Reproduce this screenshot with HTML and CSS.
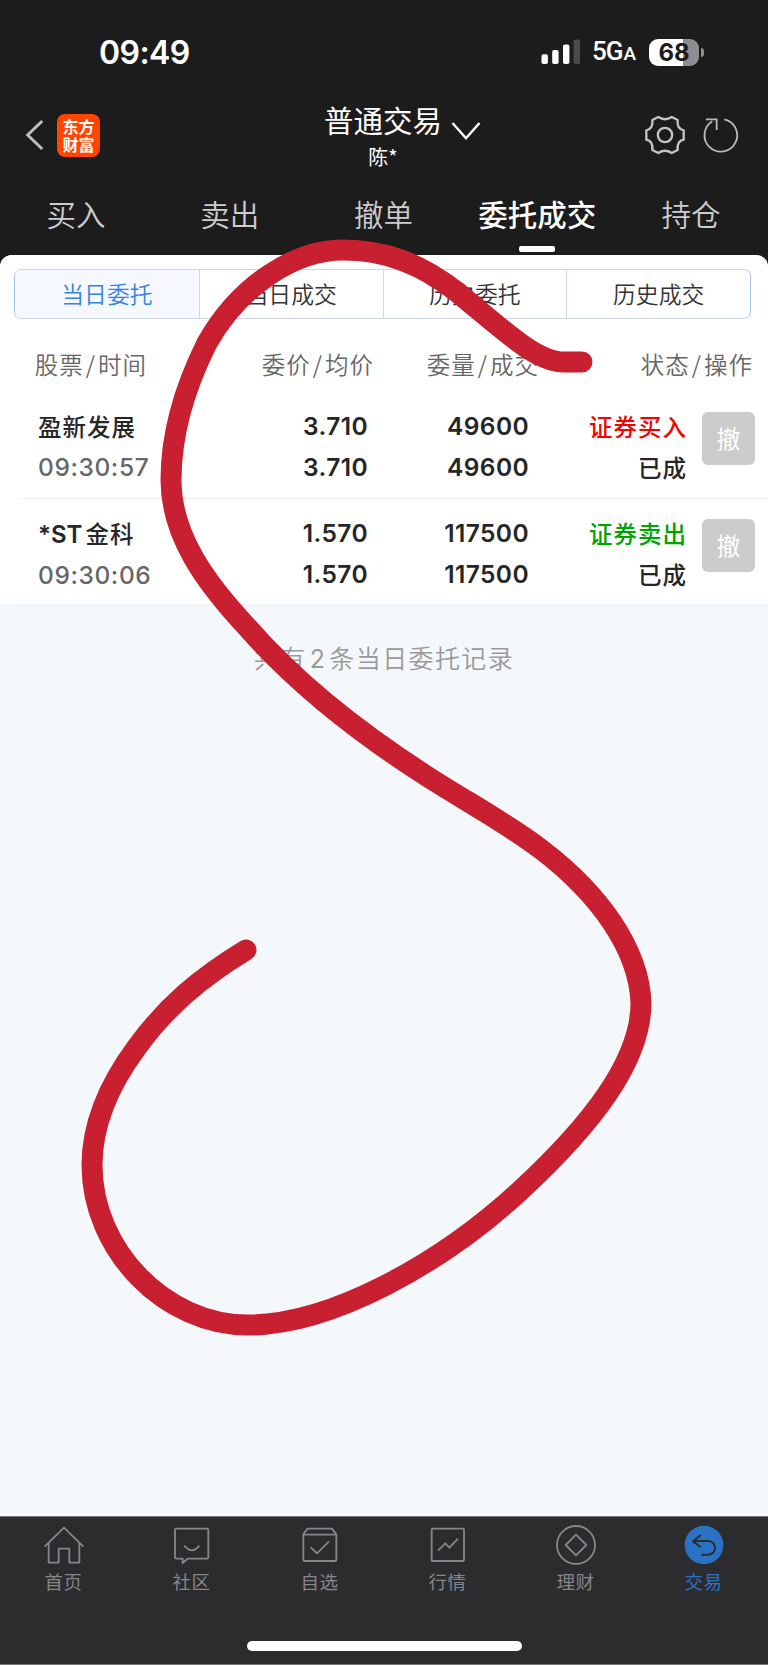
FILE: index.html
```html
<!DOCTYPE html>
<html lang="zh-CN">
<head>
<meta charset="utf-8">
<title>普通交易</title>
<link rel="stylesheet" href="styles.css">
</head>
<body>
<div class="screen">
  <header class="header">
    <div class="status">
      <div class="clock">09:49</div>
      <div class="status-right">
        <svg class="signal" width="40" height="26" viewBox="0 0 40 26">
          <rect x="0.5" y="15.2" width="6.4" height="9.8" rx="1.8" fill="#fff"/>
          <rect x="11.2" y="11" width="6.4" height="14" rx="1.8" fill="#fff"/>
          <rect x="22" y="5.6" width="6.4" height="19.4" rx="1.8" fill="#fff"/>
          <rect x="32.6" y="0.6" width="6.4" height="24.4" rx="1.8" fill="#4a4a4a"/>
        </svg>
        <div class="net">5G<span class="net-a">A</span></div>
        <div class="battery">68</div>
        <div class="nub"></div>
      </div>
    </div>
    <div class="nav">
      <div class="nav-side">
        <svg class="back" width="20" height="34" viewBox="0 0 20 34"><path d="M17.2 3L2.7 17L17.2 31" fill="none" stroke="#bdbdbd" stroke-width="3"/></svg>
        <div class="logo"><span>东方</span><span>财富</span></div>
      </div>
      <div class="nav-center">
        <div class="title">普通交易</div>
        <div class="subtitle">陈*</div>
      </div>
      <svg class="chevron" width="30" height="20" viewBox="0 0 30 20"><path d="M1.5 2L15 17.2L28.5 2" fill="none" stroke="#fff" stroke-width="2.4"/></svg>
      <div class="nav-actions">
        <svg width="40" height="40" viewBox="-60 -60 120 120" fill="none" stroke="#c4c4c4" stroke-width="7" stroke-linejoin="round">
          <path d="M-20-54C-8-46 8-46 20-54L38-45C36-28 42-17 56-14L56 14C42 17 36 28 38 45L20 54C8 46-8 46-20 54L-38 45C-36 28-42 17-56 14L-56-14C-42-17-36-28-38-45Z"/>
          <circle r="21.5"/>
        </svg>
        <svg width="40" height="40" viewBox="-60 -60 120 120" fill="none" stroke="#b8b8b8" stroke-width="5.5">
          <path d="M10-47A49 49 0 1 1-26-41M-45-47H-13V-15"/>
        </svg>
      </div>
    </div>
    <nav class="tabs">
      <div class="tab">买入</div>
      <div class="tab">卖出</div>
      <div class="tab">撤单</div>
      <div class="tab tab-on">委托成交</div>
      <div class="tab">持仓</div>
    </nav>
  </header>

  <main class="content">
    <section class="panel">
      <div class="segments">
        <div class="seg seg-on">当日委托</div>
        <div class="seg">当日成交</div>
        <div class="seg">历史委托</div>
        <div class="seg">历史成交</div>
      </div>
      <div class="thead">
        <span>股票<i>/</i>时间</span>
        <span>委价<i>/</i>均价</span>
        <span>委量<i>/</i>成交</span>
        <span>状态<i>/</i>操作</span>
      </div>
      <div class="row">
        <div class="cell name"><b>盈新发展</b><span class="num time">09:30:57</span></div>
        <div class="cell num"><span>3.710</span><span>3.710</span></div>
        <div class="cell num"><span>49600</span><span>49600</span></div>
        <div class="cell state"><b class="buy">证券买入</b><b>已成</b></div>
        <div class="cancel">撤</div>
      </div>
      <div class="row">
        <div class="cell name"><b><span class="latin">*ST</span>金科</b><span class="num time">09:30:06</span></div>
        <div class="cell num"><span>1.570</span><span>1.570</span></div>
        <div class="cell num"><span>117500</span><span>117500</span></div>
        <div class="cell state"><b class="sell">证券卖出</b><b>已成</b></div>
        <div class="cancel">撤</div>
      </div>
    </section>
    <p class="summary">共有<span class="count">2</span>条当日委托记录</p>
  </main>

  <footer class="tabbar">
    <div class="items">
      <div class="item">
        <svg class="icon" viewBox="0 0 120 120"><path d="M2 65L60 8L118 65M14 55V113H44V71H76V113H106V55"/></svg>
        <span>首页</span>
      </div>
      <div class="item">
        <svg class="icon" viewBox="0 0 120 120"><path d="M13 11H105Q109 11 109 15V97Q109 101 105 101H47L32 114V101H13Q9 101 9 97V15Q9 11 13 11ZM37 62Q60 90 82 62"/></svg>
        <span>社区</span>
      </div>
      <div class="item">
        <svg class="icon" viewBox="0 0 120 120"><path d="M10 28L22 11H96L109 28V104Q109 108 105 108H14Q10 108 10 104ZM10 29H109M32 67L51 85L87 49"/></svg>
        <span>自选</span>
      </div>
      <div class="item">
        <svg class="icon" viewBox="0 0 120 120"><rect x="11" y="11" width="97" height="97" rx="3"/><path d="M30 77L52 55L64 68L90 41"/></svg>
        <span>行情</span>
      </div>
      <div class="item">
        <svg class="icon" viewBox="0 0 120 120"><circle cx="60" cy="60" r="57"/><path d="M60 29L91 60L60 91L29 60Z"/></svg>
        <span>理财</span>
      </div>
      <div class="item item-on">
        <svg class="icon" viewBox="0 0 120 120"><circle class="disc" cx="60" cy="60" r="58"/><path class="arrow" d="M50 31L27 49L50 66M27 48H72C100 48 100 89 72 89H51"/></svg>
        <span>交易</span>
      </div>
    </div>
    <div class="home-bar"></div>
  </footer>

  <svg class="scribble" width="768" height="1665" viewBox="0 0 768 1665">
    <path d="M582 362L564 362C535 362 500 327 457 292C420 263 384 250 343 250C295 250 240 285 207 343C186 385 171 430 171 480C171 535 205 582 247 627C295 682 355 730 425 775C465 801 505 822 542 850C598 893 639 948 641 1003C641 1062 590 1126 521 1190C440 1265 330 1325 248 1325C165 1325 92 1250 92 1165C92 1122 111 1082 137 1047C166 1007 200 978 246 950"/>
  </svg>
</div>
</body>
</html>
```
FILE: styles.css
```css
* { box-sizing: border-box; }
body {
  margin: 0;
  font-family: "Noto Sans CJK SC", sans-serif;
  background: #f5f8fa;
}
.screen {
  position: relative;
  display: flex;
  flex-direction: column;
  width: 768px;
  height: 1665px;
  overflow: hidden;
  background: #1c1c1c;
}
.header { height: 255px; color: #fff; }
.status {
  display: flex;
  justify-content: space-between;
  height: 92px;
  padding: 33px 64px 0 99px;
}
.clock { font: 600 32px/40px Inter, sans-serif; letter-spacing: -0.6px; }
.status-right { display: flex; height: 38px; align-items: center; }
.net {
  width: 45px;
  margin-left: 11px;
  font: 500 26px/42px Roboto, sans-serif;
  letter-spacing: -1px;
  white-space: nowrap;
}
.net-a { font-size: 19px; margin-left: 1px; }
.battery {
  width: 50px;
  height: 27px;
  margin-left: 12px;
  border-radius: 9px;
  background: linear-gradient(90deg, #fff 34.5px, #8e8e8e 34.5px);
  color: #1c1c1c;
  font: 700 24px/27px Inter, sans-serif;
  text-align: center;
}
.nub { width: 3px; height: 9px; margin-left: 2px; border-radius: 0 4px 4px 0; background: #8e8e8e; }

.nav { display: flex; height: 88px; padding: 0 27px 0 25px; }
.nav-side { display: flex; align-items: center; gap: 12px; width: 219px; height: 86px; }
.logo {
  display: flex;
  flex-direction: column;
  align-items: center;
  width: 43px;
  height: 43px;
  padding-top: 3px;
  border-radius: 8px;
  background: #ff4500;
  font-size: 16px;
  font-weight: 700;
  line-height: 18px;
}
.nav-center { width: 278px; padding-top: 6px; text-align: center; }
.title { font-size: 29.5px; line-height: 42px; }
.subtitle { font-size: 20px; line-height: 34px; }
.chevron { margin: 29px 0 0 -71px; flex: none; }
.nav-actions { display: flex; gap: 16px; margin: 23px 0 0 auto; }

.tabs { display: grid; grid-template-columns: repeat(5, 1fr); height: 75px; margin-left: -1px; }
.tab {
  display: flex;
  flex-direction: column;
  align-items: center;
  color: #cdcdcd;
  font-size: 29.5px;
  font-weight: 350;
  line-height: 44px;
  padding-top: 11px;
}
.tab-on { color: #fff; font-weight: 500; }
.tab-on::after { content: ""; width: 36px; height: 6px; margin-top: 11px; border-radius: 2px; background: #fff; }

.content { height: 1261px; background: #f5f8fa; }
.panel { height: 349px; padding-top: 14px; background: #fff; border-radius: 12px 12px 0 0; }
.content { border-radius: 12px 12px 0 0; }
.segments {
  display: grid;
  grid-template-columns: repeat(4, 1fr);
  width: 737px;
  height: 50px;
  margin-left: 14px;
  border: 1px solid #cfd8e2;
  border-left-color: #a5c6f2;
  border-right-color: #a5c6f2;
  border-radius: 7px;
  overflow: hidden;
}
.seg { color: #333; font-size: 22.800px; line-height: 47px; text-align: center; border-left: 1px solid #cfd8e2; font-weight: 350; }
.seg-on { border-left: 0; background: #f5f9ff; color: #3582e6; }
.thead {
  display: grid;
  grid-template-columns: 147px 227px 165px 214px;
  height: 73px;
  padding-top: 17px;
  color: #666;
  font-size: 23.500px;
  line-height: 56px;
  letter-spacing: 1px;
  font-weight: 350;
}
.thead span { text-align: right; white-space: nowrap; }
.thead i { margin: 0 2px; font-style: normal; }
.row {
  display: grid;
  grid-template-columns: 180px 170px 161px 158px 67px;
  height: 107px;
  margin-left: 18px;
  padding-top: 14px;
  border-bottom: 1px solid #f0f0f0;
}
.cell { display: flex; flex-direction: column; align-items: flex-end; color: #262626; font-size: 23.500px; line-height: 41px; white-space: nowrap; }
.cell b { font-weight: 500; letter-spacing: 1px; }
.name { align-items: flex-start; padding-left: 20px; }
.num, .latin { font-family: Inter, sans-serif; font-size: 24.500px; font-weight: 600; letter-spacing: 0.400px; }
.latin { margin-right: 3px; font-size: 24px; letter-spacing: 0; }
.time { color: #666; font-weight: 500; letter-spacing: 0.600px; }
.cell .buy { color: #f80000; }
.cell .sell { color: #00a300; }
.cancel {
  width: 53px;
  height: 53px;
  margin: 6px 0 0 15px;
  border-radius: 6px;
  background: #ccc;
  color: #fff;
  font-size: 23.500px;
  line-height: 52px;
  text-align: center;
}
.summary { margin: 0; padding-top: 34px; color: #999; font-size: 25px; line-height: 38px; letter-spacing: 1.400px; text-align: center; font-weight: 350; }
.count { margin: 0 3px; font: 400 25px Inter, sans-serif; }

.tabbar { height: 149px; border-top: 1px solid #77777a; border-bottom: 1px solid #77777a; background: #2c2c2e; }
.items { display: grid; grid-template-columns: repeat(6, 1fr); height: 124px; padding-top: 8px; }
.item { display: flex; flex-direction: column; align-items: center; color: #85858b; font-size: 18.500px; line-height: 28px; letter-spacing: 0.500px; }
.item span { margin: 2px 1px 0 0; }
.icon { width: 40px; height: 40px; fill: none; stroke: #85858b; stroke-width: 5.500; stroke-linejoin: round; }
.item-on { color: #2b72c4; }
.disc { fill: #2b72c4; stroke: none; }
.arrow { stroke: #2c2c2e; stroke-width: 6; }
.home-bar { width: 275px; height: 10px; margin: 0 auto; border-radius: 5px; background: #fff; }

.scribble { position: absolute; left: 0; top: 0; filter: blur(0.6px); }
.scribble path { fill: none; stroke: #c81f31; stroke-width: 21; stroke-linecap: round; stroke-linejoin: round; }
```
